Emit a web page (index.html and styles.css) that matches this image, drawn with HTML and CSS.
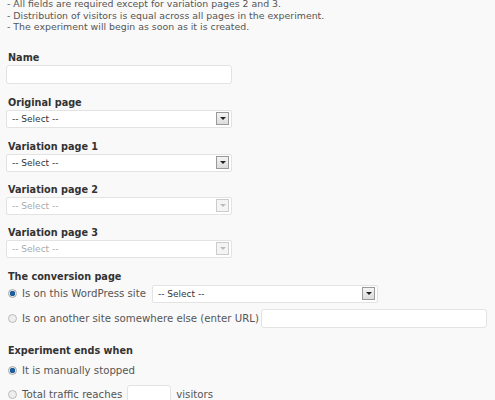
FILE: index.html
```html
<!DOCTYPE html>
<html lang="en">

<head>
    <meta charset="UTF-8">
    <title>New Experiment</title>
    <link rel="stylesheet" href="styles.css">
</head>

<body>
    <div class="notes">
        <p>- All fields are required except for variation pages 2 and 3.</p>
        <p>- Distribution of visitors is equal across all pages in the experiment.</p>
        <p>- The experiment will begin as soon as it is created.</p>
    </div>

    <div class="field first">
        <div class="field-label">Name</div>
        <div class="text-input wide"></div>
    </div>

    <div class="field">
        <div class="field-label">Original page</div>
        <div class="select">
            <span>-- Select --</span>
            <span class="select-arrow"></span>
        </div>
    </div>

    <div class="field">
        <div class="field-label">Variation page 1</div>
        <div class="select">
            <span>-- Select --</span>
            <span class="select-arrow"></span>
        </div>
    </div>

    <div class="field tight">
        <div class="field-label">Variation page 2</div>
        <div class="select disabled">
            <span>-- Select --</span>
            <span class="select-arrow"></span>
        </div>
    </div>

    <div class="field tight">
        <div class="field-label">Variation page 3</div>
        <div class="select disabled">
            <span>-- Select --</span>
            <span class="select-arrow"></span>
        </div>
    </div>

    <div class="field">
        <div class="field-label">The conversion page</div>
        <div class="radio-row first">
            <span class="radio checked"></span>
            <span class="radio-text">Is on this WordPress site</span>
            <div class="select">
                <span>-- Select --</span>
                <span class="select-arrow"></span>
            </div>
        </div>
        <div class="radio-row">
            <span class="radio"></span>
            <span class="radio-text">Is on another site somewhere else (enter URL)</span>
            <div class="text-input wide url"></div>
        </div>
    </div>

    <div class="field ends">
        <div class="field-label">Experiment ends when</div>
        <div class="radio-row plain">
            <span class="radio checked"></span>
            <span class="radio-text">It is manually stopped</span>
        </div>
        <div class="radio-row">
            <span class="radio"></span>
            <span class="radio-text">Total traffic reaches</span>
            <div class="text-input small"></div>
            <span class="radio-text">visitors</span>
        </div>
    </div>
</body>

</html>
```

FILE: styles.css
```css
* {
    margin: 0;
    padding: 0;
    box-sizing: border-box;
}

body {
    background-color: #f9f9f9;
    color: #555;
    font-family: 'DejaVu Sans', Verdana, sans-serif;
    font-size: 9px;
    padding: 0 6px;
    overflow: hidden;
}

.notes {
    margin-top: -2px;
    padding-left: 1px;
    font-size: 9.4px;
}

.notes p {
    line-height: 11.5px;
}

.field {
    margin-top: 13px;
}

.field.first {
    margin-top: 19px;
}

.field.tight {
    margin-top: 12px;
}

.field.ends {
    margin-top: 17px;
}

.field-label {
    font-weight: bold;
    font-size: 9.7px;
    color: #333;
    line-height: 12px;
    padding-left: 2px;
    margin-bottom: 1px;
}

.text-input {
    height: 19px;
    background-color: #fff;
    border: 1px solid #e3e3e3;
    border-radius: 3px;
    flex-shrink: 0;
}

.text-input.wide {
    width: 226px;
}

.text-input.url {
    margin-left: -3px;
}

.text-input.small {
    width: 44px;
    height: 20px;
}

.select {
    width: 226px;
    height: 18px;
    background-color: #fff;
    border: 1px solid #e3e3e3;
    border-radius: 2px;
    display: flex;
    align-items: center;
    justify-content: space-between;
    padding: 0 2px 0 5px;
    color: #333;
    flex-shrink: 0;
}

.select.disabled {
    color: #aaa;
}

.select-arrow {
    width: 13px;
    height: 13px;
    border: 1px solid #999;
    background: linear-gradient(#f4f4f4, #dcdcdc);
    position: relative;
}

.select-arrow::after {
    content: '';
    position: absolute;
    left: 3px;
    top: 4px;
    border-left: 3px solid transparent;
    border-right: 3px solid transparent;
    border-top: 3px solid #222;
}

.select.disabled .select-arrow {
    border-color: #ccc;
    background: #f4f4f4;
}

.select.disabled .select-arrow::after {
    border-top-color: #bbb;
}

.radio-row {
    display: flex;
    align-items: center;
    gap: 5px;
    margin-top: 6px;
    padding-left: 2px;
}

.radio-row.first {
    margin-top: 2px;
}

.radio-row.plain {
    margin-top: 8px;
    margin-bottom: 9px;
}

.radio-row .radio-text {
    font-size: 10.2px;
    white-space: nowrap;
    flex-shrink: 0;
}

.radio-row .select {
    margin-left: 1px;
}

.radio {
    width: 9px;
    height: 9px;
    border-radius: 50%;
    border: 1px solid #bbb;
    background-color: #eee;
    flex-shrink: 0;
}

.radio.checked {
    background: radial-gradient(circle, #1b5e9c 0 2.5px, #e6e6e6 3px);
    border-color: #aaa;
}
```
